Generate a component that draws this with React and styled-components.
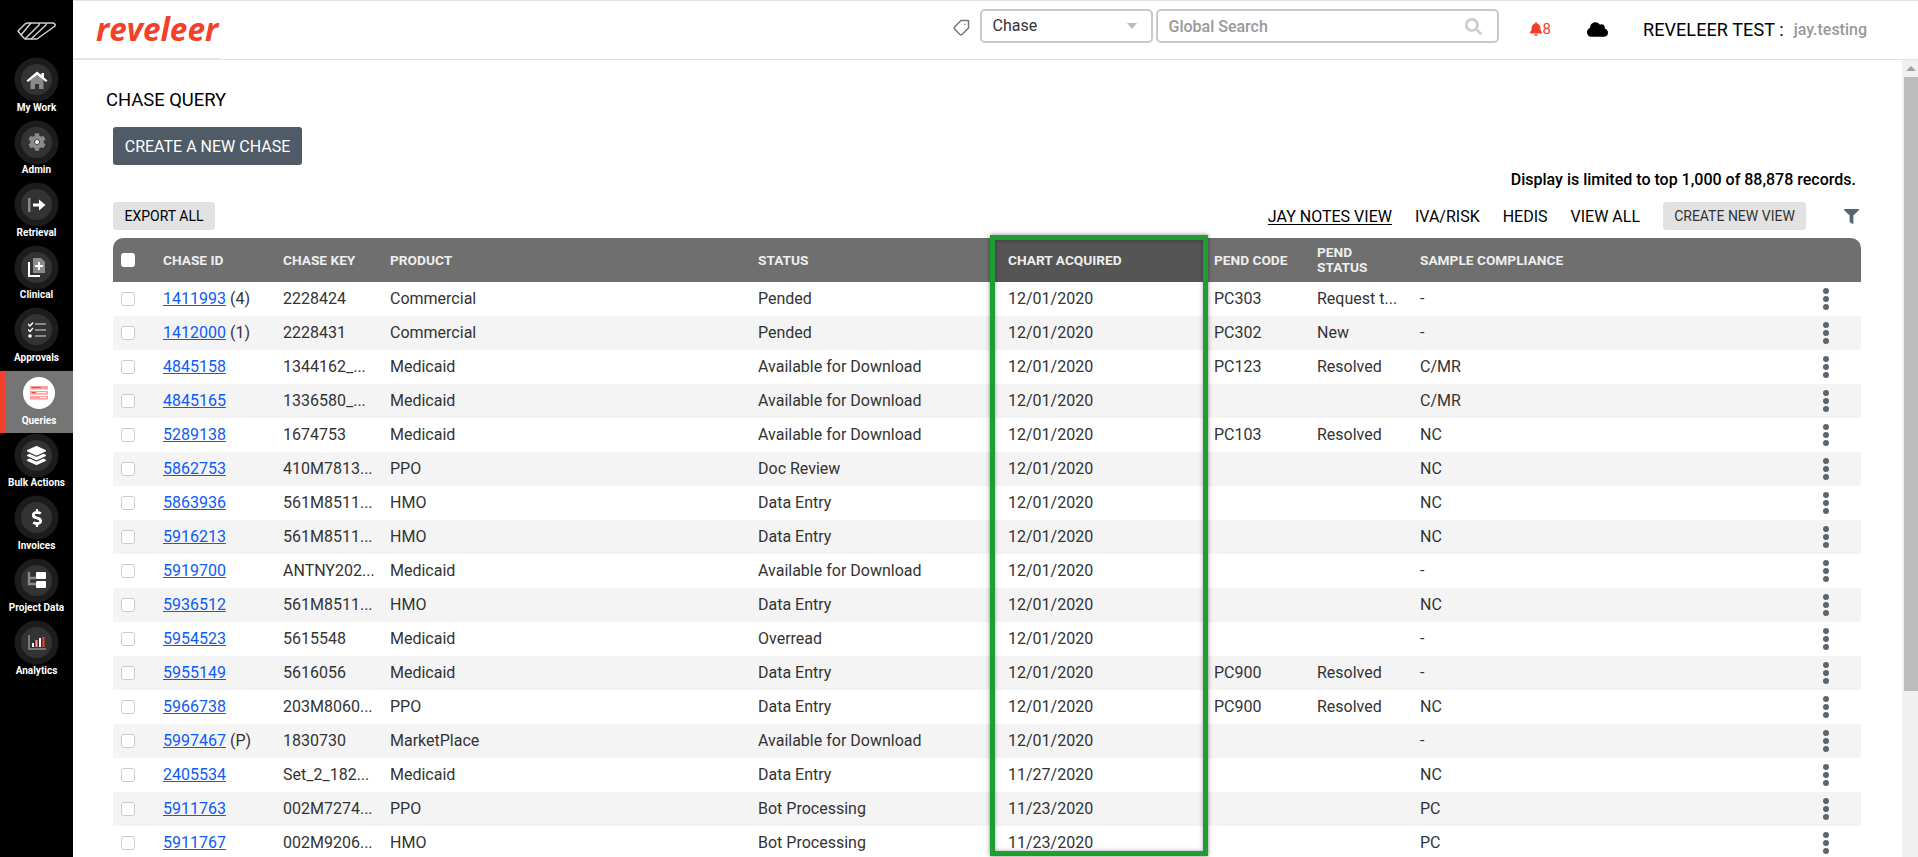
import React from 'react';
import styled, { createGlobalStyle } from 'styled-components';
import { FaCog, FaBell, FaCloud, FaFilter, FaSearch, FaDollarSign, FaLayerGroup } from 'react-icons/fa';
import { FiTag } from 'react-icons/fi';

const GlobalStyle = createGlobalStyle`
  html, body {
    margin: 0;
    height: 100%;
    overflow: hidden;
    background: #fff;
    font-family: Roboto, "Liberation Sans", sans-serif;
  }
  #root { height: 100%; }
  * { box-sizing: border-box; }
`;

const rows = [
  ['1411993', ' (4)', '2228424', 'Commercial', 'Pended', '12/01/2020', 'PC303', 'Request t...', '-'],
  ['1412000', ' (1)', '2228431', 'Commercial', 'Pended', '12/01/2020', 'PC302', 'New', '-'],
  ['4845158', '', '1344162_...', 'Medicaid', 'Available for Download', '12/01/2020', 'PC123', 'Resolved', 'C/MR'],
  ['4845165', '', '1336580_...', 'Medicaid', 'Available for Download', '12/01/2020', '', '', 'C/MR'],
  ['5289138', '', '1674753', 'Medicaid', 'Available for Download', '12/01/2020', 'PC103', 'Resolved', 'NC'],
  ['5862753', '', '410M7813...', 'PPO', 'Doc Review', '12/01/2020', '', '', 'NC'],
  ['5863936', '', '561M8511...', 'HMO', 'Data Entry', '12/01/2020', '', '', 'NC'],
  ['5916213', '', '561M8511...', 'HMO', 'Data Entry', '12/01/2020', '', '', 'NC'],
  ['5919700', '', 'ANTNY202...', 'Medicaid', 'Available for Download', '12/01/2020', '', '', '-'],
  ['5936512', '', '561M8511...', 'HMO', 'Data Entry', '12/01/2020', '', '', 'NC'],
  ['5954523', '', '5615548', 'Medicaid', 'Overread', '12/01/2020', '', '', '-'],
  ['5955149', '', '5616056', 'Medicaid', 'Data Entry', '12/01/2020', 'PC900', 'Resolved', '-'],
  ['5966738', '', '203M8060...', 'PPO', 'Data Entry', '12/01/2020', 'PC900', 'Resolved', 'NC'],
  ['5997467', ' (P)', '1830730', 'MarketPlace', 'Available for Download', '12/01/2020', '', '', '-'],
  ['2405534', '', 'Set_2_182...', 'Medicaid', 'Data Entry', '11/27/2020', '', '', 'NC'],
  ['5911763', '', '002M7274...', 'PPO', 'Bot Processing', '11/23/2020', '', '', 'PC'],
  ['5911767', '', '002M9206...', 'HMO', 'Bot Processing', '11/23/2020', '', '', 'PC'],
];

// small custom drawings for the nav items react-icons has no close match for
const LogoMark = () => (
  <svg width="40" height="18" viewBox="0 0 40 18" fill="none" stroke="#cfcfcf" strokeWidth="1.5" strokeLinejoin="round">
    <path d="M1 9 L8 2 Q9 1 11 1 H14 L4 13 Z" />
    <path d="M4 13 L8 17 L22 3 Q23 1 20 1 H14" />
    <path d="M8 17 H14 L29 3 Q30 1 27 1 H22" />
    <path d="M14 17 H20 L38 4 Q39 2 36 1 H29" />
  </svg>
);
const HomeIcon = () => (
  <svg width="22" height="20" viewBox="0 0 22 20">
    <path d="M4.5 10 L11 5 L17.5 10 V19 H13 V14 H9 V19 H4.5 Z" fill="#8a8a8a" />
    <path d="M0.5 10.5 L11 1.5 L15.5 5 V3 H18 V7.5 L21.5 10.5 L20 12 L11 5 L2 12 Z" fill="#fff" />
  </svg>
);
const AdminIcon = () => (
  <AdminGear><FaCog size={18} color="#8a8a8a" /></AdminGear>
);
const RetrievalIcon = () => (
  <svg width="18" height="16" viewBox="0 0 18 16">
    <rect x="0" y="1" width="2.5" height="14" fill="#8a8a8a" />
    <path d="M5 6.5 H11 V2.5 L17.5 8 L11 13.5 V9.5 H5 Z" fill="#fff" />
  </svg>
);
const ClinicalIcon = () => (
  <svg width="18" height="20" viewBox="0 0 18 20">
    <path d="M1 5 V19 H12" fill="none" stroke="#fff" strokeWidth="2" />
    <path d="M5 1 H13 L17 5 V16 H5 Z" fill="#8a8a8a" />
    <path d="M10 5 H12 V8 H15 V10 H12 V13 H10 V10 H7 V8 H10 Z" fill="#fff" />
  </svg>
);
const ApprovalsIcon = () => (
  <svg width="18" height="16" viewBox="0 0 18 16">
    <path d="M0 2 L2 4 L5 0.5 M0 7.5 L2 9.5 L5 6" fill="none" stroke="#fff" strokeWidth="1.4" />
    <circle cx="2" cy="14" r="1.8" fill="#fff" />
    <rect x="7" y="1" width="11" height="2" fill="#8a8a8a" />
    <rect x="7" y="7" width="11" height="2" fill="#8a8a8a" />
    <rect x="7" y="13" width="11" height="2" fill="#8a8a8a" />
  </svg>
);
const QueriesIcon = () => (
  <svg width="18" height="14" viewBox="0 0 18 14">
    <rect width="18" height="3.6" fill="#ff9ea0" />
    <rect y="5" width="18" height="3.6" fill="#ff9ea0" />
    <rect y="10" width="18" height="3.6" fill="#ff9ea0" />
    <rect x="2" y="1" width="9" height="1" fill="#f4402a" />
    <rect x="2" y="6" width="3" height="1.2" fill="#f4402a" />
    <rect x="7" y="6" width="9" height="1" fill="#fff" />
    <rect x="10" y="11" width="6" height="1" fill="#fff" />
  </svg>
);
const ProjectIcon = () => (
  <svg width="20" height="18" viewBox="0 0 20 18">
    <path d="M2 1 V13 H9 M2 7 H9" fill="none" stroke="#8a8a8a" strokeWidth="2.4" />
    <rect x="9" y="1" width="10" height="7" rx="1" fill="#fff" />
    <rect x="9" y="10" width="10" height="7" rx="1" fill="#fff" />
  </svg>
);
const AnalyticsIcon = () => (
  <svg width="18" height="16" viewBox="0 0 18 16">
    <path d="M1 0 V14 H18" fill="none" stroke="#8a8a8a" strokeWidth="1.6" />
    <rect x="4" y="8" width="2" height="4" fill="#fff" />
    <rect x="7.5" y="5" width="2" height="7" fill="#ff9ea0" />
    <rect x="11" y="3" width="2" height="9" fill="#fff" />
    <rect x="14.5" y="2" width="2" height="10" fill="#f4402a" />
  </svg>
);

const navItems = [
  { label: 'My Work', icon: <HomeIcon /> },
  { label: 'Admin', icon: <AdminIcon /> },
  { label: 'Retrieval', icon: <RetrievalIcon /> },
  { label: 'Clinical', icon: <ClinicalIcon /> },
  { label: 'Approvals', icon: <ApprovalsIcon /> },
  { label: 'Queries', icon: <QueriesIcon />, active: true },
  { label: 'Bulk Actions', icon: <FaLayerGroup size={19} color="#fff" /> },
  { label: 'Invoices', icon: <FaDollarSign size={18} color="#fff" /> },
  { label: 'Project Data', icon: <ProjectIcon /> },
  { label: 'Analytics', icon: <AnalyticsIcon /> },
];

const App = () => (
  <Page>
    <GlobalStyle />
    <Sidebar>
      <LogoSlot><LogoMark /></LogoSlot>
      {navItems.map((item) => (
        <NavItem key={item.label} $active={item.active}>
          <NavCircle $active={item.active}>{item.icon}</NavCircle>
          <NavLabel>{item.label}</NavLabel>
        </NavItem>
      ))}
    </Sidebar>
    <Main>
      <Header>
        <Brand>reveleer</Brand>
        <HeaderRight>
          <TagSlot><FiTag size={18} color="#777" style={{ transform: 'scaleX(-1)' }} /></TagSlot>
          <TypeSelect>Chase<Caret /></TypeSelect>
          <SearchBox>Global Search<FaSearch size={17} color="#ccc" /></SearchBox>
          <Bell><FaBell size={14} />8</Bell>
          <CloudSlot><FaCloud size={21} color="#000" /></CloudSlot>
          <Org>REVELEER TEST :</Org>
          <UserName>jay.testing</UserName>
        </HeaderRight>
      </Header>
      <Body>
        <Content>
          <PageTitle>CHASE QUERY</PageTitle>
          <CreateButton>CREATE A NEW CHASE</CreateButton>
          <RecordNote>Display is limited to top 1,000 of 88,878 records.</RecordNote>
          <Toolbar>
            <ExportButton>EXPORT ALL</ExportButton>
            <ViewLinks>
              <ViewLink $active>JAY NOTES VIEW</ViewLink>
              <ViewLink>IVA/RISK</ViewLink>
              <ViewLink>HEDIS</ViewLink>
              <ViewLink>VIEW ALL</ViewLink>
              <NewViewButton>CREATE NEW VIEW</NewViewButton>
              <FilterSlot><FaFilter size={15} color="#566573" /></FilterSlot>
            </ViewLinks>
          </Toolbar>
          <TableWrap>
            <HeadRow>
              <CheckCell><HeadCheck /></CheckCell>
              <HeadCell>CHASE ID</HeadCell>
              <HeadCell>CHASE KEY</HeadCell>
              <HeadCell>PRODUCT</HeadCell>
              <HeadCell>STATUS</HeadCell>
              <HeadCell $dark>CHART ACQUIRED</HeadCell>
              <HeadCell>PEND CODE</HeadCell>
              <HeadCell>PEND<br />STATUS</HeadCell>
              <HeadCell>SAMPLE COMPLIANCE</HeadCell>
              <HeadCell />
            </HeadRow>
            {rows.map((r) => (
              <Row key={r[0]}>
                <CheckCell><RowCheck /></CheckCell>
                <Cell><ChaseLink>{r[0]}</ChaseLink>{r[1]}</Cell>
                <Cell>{r[2]}</Cell>
                <Cell>{r[3]}</Cell>
                <Cell>{r[4]}</Cell>
                <DateCell>{r[5]}</DateCell>
                <Cell>{r[6]}</Cell>
                <Cell>{r[7]}</Cell>
                <Cell>{r[8]}</Cell>
                <MenuCell><Dot /><Dot /><Dot /></MenuCell>
              </Row>
            ))}
            <Highlight />
          </TableWrap>
        </Content>
        <ScrollRail>
          <ScrollArrow />
          <ScrollThumb />
        </ScrollRail>
      </Body>
    </Main>
  </Page>
);

export default App;

const COLUMNS = '50px 120px 107px 368px 241px 215px 103px 103px 1fr 60px';

const Page = styled.div`
  display: flex;
  height: 100vh;
  overflow: hidden;
`;

const Sidebar = styled.aside`
  flex: 0 0 73px;
  background: #000;
  display: flex;
  flex-direction: column;
`;

const LogoSlot = styled.div`
  height: 57.6px;
  display: flex;
  align-items: center;
  justify-content: center;
  padding-top: 4px;
`;

const NavItem = styled.div`
  height: 62.6px;
  display: flex;
  flex-direction: column;
  align-items: center;
  background: ${(p) => (p.$active ? '#757575' : 'transparent')};
  border-left: ${(p) => (p.$active ? '5px solid #f4402a' : '0')};
`;

const NavCircle = styled.div`
  width: ${(p) => (p.$active ? '32px' : '31px')};
  height: ${(p) => (p.$active ? '32px' : '31px')};
  margin-top: 6.5px;
  border-radius: 50%;
  background: ${(p) => (p.$active ? '#fff' : '#333')};
  box-shadow: ${(p) => (p.$active ? 'none' : '0 0 0 6.5px #1c1c1c')};
  display: flex;
  align-items: center;
  justify-content: center;
  flex: none;
`;

const AdminGear = styled.span`
  position: relative;
  display: flex;
  &::after {
    content: '';
    position: absolute;
    left: 7px;
    top: 7px;
    width: 4px;
    height: 4px;
    border-radius: 50%;
    background: #fff;
  }
`;

const NavLabel = styled.div`
  margin-top: auto;
  padding-bottom: 6.5px;
  color: #fff;
  font-size: 10px;
  font-weight: 700;
  line-height: 12px;
  white-space: nowrap;
`;

const Main = styled.div`
  flex: 1;
  min-width: 0;
  display: flex;
  flex-direction: column;
`;

const Header = styled.header`
  position: relative;
  flex: 0 0 60px;
  border-top: 1px solid #e2e2e2;
  border-bottom: 1px solid #e2e2e2;
  display: flex;
  align-items: center;
  justify-content: space-between;
  padding-left: 23px;
  &::after {
    content: '';
    position: absolute;
    left: 0;
    bottom: 0;
    width: 147px;
    height: 1px;
    background: #e6e6e6;
  }
`;

const Brand = styled.div`
  font-family: "Open Sans", Roboto, sans-serif;
  font-size: 31.5px;
  font-weight: 700;
  font-style: italic;
  color: #f4402a;
  line-height: 30px;
  margin-top: -3px;
`;

const HeaderRight = styled.div`
  display: flex;
  align-items: center;
  height: 100%;
  padding-bottom: 8px;
`;

const TagSlot = styled.div`
  display: flex;
  margin: 4px 10px 0 0;
`;

const TypeSelect = styled.div`
  width: 173px;
  height: 34px;
  border: 2px solid #c9c9c9;
  border-radius: 5px;
  padding: 0 14px 2px 11px;
  display: flex;
  align-items: center;
  justify-content: space-between;
  font-size: 16px;
  color: #333;
  margin-right: 3px;
`;

const Caret = styled.span`
  width: 0;
  height: 0;
  border-left: 5px solid transparent;
  border-right: 5px solid transparent;
  border-top: 6px solid #bbb;
  margin-top: 2px;
`;

const SearchBox = styled.div`
  width: 343px;
  height: 34px;
  border: 2px solid #c9c9c9;
  border-radius: 5px;
  padding: 0 15px 0 11px;
  display: flex;
  align-items: center;
  justify-content: space-between;
  font-size: 16px;
  font-weight: 500;
  color: #999;
`;

const Bell = styled.div`
  display: flex;
  align-items: center;
  margin: 6px 0 0 30px;
  font-size: 15px;
  color: #f4402a;
`;

const CloudSlot = styled.div`
  display: flex;
  margin: 6px 0 0 36px;
`;

const Org = styled.div`
  margin: 6px 0 0 35px;
  font-size: 18px;
  letter-spacing: 0.1px;
  color: #000;
`;

const UserName = styled.div`
  margin: 6px 51px 0 10px;
  font-size: 16px;
  font-weight: 500;
  color: #999;
`;

const Body = styled.div`
  flex: 1;
  min-height: 0;
  display: flex;
`;

const Content = styled.main`
  flex: 1;
  min-width: 0;
  overflow: hidden;
  padding: 29px 40px 0 33px;
`;

const PageTitle = styled.h1`
  margin: 0 0 17px 0;
  font-size: 18.4px;
  font-weight: 400;
  line-height: 21px;
  color: #000;
`;

const CreateButton = styled.button`
  display: block;
  margin-left: 7px;
  width: 189px;
  height: 38px;
  border: 0;
  border-radius: 3px;
  background: #4f5b66;
  color: #fff;
  font-family: inherit;
  font-size: 16px;
  padding: 0;
`;

const RecordNote = styled.div`
  text-align: right;
  font-size: 16px;
  font-weight: 500;
  line-height: 18px;
  color: #000;
  margin-top: 6px;
  padding-right: 6px;
`;

const Toolbar = styled.div`
  display: flex;
  align-items: center;
  justify-content: space-between;
  margin: 13px 0 8px 7px;
`;

const ExportButton = styled.button`
  width: 102px;
  height: 28px;
  border: 0;
  border-radius: 3px;
  background: #e2e2e2;
  color: #000;
  font-family: inherit;
  font-size: 14px;
  padding: 0;
`;

const ViewLinks = styled.div`
  display: flex;
  align-items: center;
`;

const ViewLink = styled.a`
  font-size: 16px;
  color: #000;
  margin-right: 23px;
  text-decoration: ${(p) => (p.$active ? 'underline' : 'none')};
  text-underline-offset: 2px;
`;

const NewViewButton = styled.button`
  width: 143px;
  height: 28px;
  border: 0;
  border-radius: 3px;
  background: #e2e2e2;
  color: #333;
  font-family: inherit;
  font-size: 14px;
  padding: 0;
`;

const FilterSlot = styled.div`
  display: flex;
  margin-left: 38px;
  margin-right: 3px;
`;

const TableWrap = styled.div`
  position: relative;
  width: 1748px;
  margin-left: 7px;
`;

const HeadRow = styled.div`
  display: grid;
  grid-template-columns: ${COLUMNS};
  height: 44px;
  background: #6f6f6f;
  border-radius: 10px 10px 0 0;
`;

const HeadCell = styled.div`
  display: flex;
  align-items: center;
  font-size: 13.7px;
  font-weight: 700;
  line-height: 15px;
  color: #eee;
  background: ${(p) => (p.$dark ? '#555' : 'transparent')};
  margin: ${(p) => (p.$dark ? '0 6px 0 -4px' : '0')};
  padding-left: ${(p) => (p.$dark ? '13px' : '0')};
`;

const CheckCell = styled.div`
  display: flex;
  align-items: center;
  padding-left: 8px;
`;

const HeadCheck = styled.span`
  width: 14px;
  height: 14px;
  background: #fff;
  border-radius: 3px;
`;

const RowCheck = styled.span`
  width: 14px;
  height: 14px;
  background: #fff;
  border: 1px solid #ccc;
  border-radius: 3px;
`;

const Row = styled.div`
  display: grid;
  grid-template-columns: ${COLUMNS};
  height: 34px;
  &:nth-child(odd) { background: #f4f4f4; }
`;

const Cell = styled.div`
  display: flex;
  align-items: center;
  white-space: pre;
  font-size: 16px;
  color: #333;
  padding-bottom: 2px;
`;

const DateCell = styled(Cell)`
  padding-left: 9px;
`;

const ChaseLink = styled.a`
  color: #0d5cf5;
  text-decoration: underline;
`;

const MenuCell = styled.div`
  display: flex;
  flex-direction: column;
  align-items: center;
  justify-content: center;
  gap: 2px;
  padding-right: 10px;
`;

const Dot = styled.span`
  width: 6px;
  height: 6px;
  border-radius: 50%;
  background: #5d666e;
`;

const Highlight = styled.div`
  position: absolute;
  left: 877px;
  top: -3px;
  width: 218px;
  height: 621px;
  border: 5px solid #1c9e30;
  box-shadow: 0 0 4px rgba(0, 0, 0, 0.5), inset 0 0 4px rgba(0, 0, 0, 0.35);
`;

const ScrollRail = styled.div`
  flex: 0 0 16px;
  background: #f0f0f0;
  display: flex;
  flex-direction: column;
  align-items: stretch;
`;

const ScrollArrow = styled.div`
  height: 17px;
  display: flex;
  justify-content: center;
  padding: 6px 0 0 2px;
  &::before {
    content: '';
    width: 0;
    height: 0;
    border-left: 5px solid transparent;
    border-right: 5px solid transparent;
    border-bottom: 5px solid #a3a3a3;
  }
`;

const ScrollThumb = styled.div`
  height: 614px;
  margin-left: 2px;
  background: #bdbdbd;
`;
